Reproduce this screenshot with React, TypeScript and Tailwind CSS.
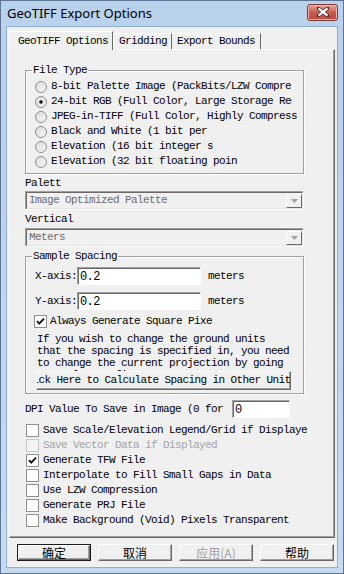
import React from "react";

const mono = "[font-family:'Liberation_Mono','DejaVu_Sans_Mono',monospace] text-[11px] tracking-[-0.6px]";
const cjk = "[font-family:'Noto_Sans_CJK_SC',sans-serif] text-[12px]";

const fileTypes = [
  { label: "8-bit Palette Image (PackBits/LZW Compressed)", w: "w-[240px]" },
  { label: "24-bit RGB (Full Color, Large Storage Required)", w: "w-[241px]" },
  { label: "JPEG-in-TIFF (Full Color, Highly Compressed)", w: "w-[246px]" },
  { label: "Black and White (1 bit per pixel)", w: "w-[157px]" },
  { label: "Elevation (16 bit integer samples)", w: "w-[162px]" },
  { label: "Elevation (32 bit floating point samples)", w: "w-[187px]" },
];

const options = [
  { label: "Save Scale/Elevation Legend/Grid if Displayed", checked: false, disabled: false },
  { label: "Save Vector Data if Displayed", checked: false, disabled: true },
  { label: "Generate TFW File", checked: true, disabled: false },
  { label: "Interpolate to Fill Small Gaps in Data", checked: false, disabled: false },
  { label: "Use LZW Compression", checked: false, disabled: false },
  { label: "Generate PRJ File", checked: false, disabled: false },
  { label: "Make Background (Void) Pixels Transparent", checked: false, disabled: false },
];

function Radio({ checked, id }: { checked?: boolean; id: number }) {
  return (
    <svg width="12" height="12" viewBox="0 0 12 12" className="shrink-0">
      <defs>
        <linearGradient id={`rg${id}`} x1="0" y1="0" x2="1" y2="1">
          <stop offset="0" stopColor="#d4d4d4" />
          <stop offset="1" stopColor="#ffffff" />
        </linearGradient>
      </defs>
      <circle cx="6" cy="6" r="5.5" fill={`url(#rg${id})`} stroke="#8c8e8f" />
      <circle cx="6" cy="6" r="4" fill="none" stroke="#e6e6e6" strokeWidth="0.8" />
      {checked && <circle cx="6" cy="6" r="1.8" fill="#111" />}
    </svg>
  );
}

function Check({ checked, disabled }: { checked?: boolean; disabled?: boolean }) {
  return (
    <svg width="13" height="13" viewBox="0 0 13 13" className="shrink-0">
      <rect x="0.5" y="0.5" width="12" height="12" fill={disabled ? "#f4f4f4" : "#fff"} stroke={disabled ? "#c8c8c8" : "#8e8f8f"} />
      {checked && <path d="M3 6.2 L5.2 8.6 L10 3.6" fill="none" stroke="#111" strokeWidth="1.9" />}
    </svg>
  );
}

function Combo({ text }: { text: string }) {
  return (
    <div className="flex h-[18px] w-[278px] items-center border-t border-l border-[#a0a0a0] shadow-[1px_1px_0_#fff] bg-[#f0f0f0]">
      <div className="flex h-full w-full items-center border-t border-l border-[#696969] border-r border-b border-r-[#e3e3e3] border-b-[#e3e3e3]">
        <span className={`${mono} flex-1 pl-[2px] text-[#6d6d6d]`}>{text}</span>
        <div className="flex h-[14px] w-[16px] items-center justify-center border-t border-l border-white border-r border-b border-r-[#696969] border-b-[#696969] bg-[#f0f0f0]">
          <svg width="7" height="4" viewBox="0 0 7 4">
            <path d="M0 0 H7 L3.5 4 Z" fill="#a0a0a0" />
          </svg>
        </div>
      </div>
    </div>
  );
}

function Field({ value, w }: { value: string; w: string }) {
  return (
    <div className={`${w} h-[18px] shrink-0 border-t border-l border-[#a0a0a0] border-r border-b border-r-white border-b-white`}>
      <div className="flex h-full items-center border-t border-l border-[#696969] bg-white pl-[1px]">
        <span className={`${mono} text-[12px] text-black`}>{value}</span>
      </div>
    </div>
  );
}

function Btn({ label, primary, disabled }: { label: string; primary?: boolean; disabled?: boolean }) {
  return (
    <div className={`h-[17px] w-[74px] ${primary ? "border border-[#1c1c1c]" : ""}`}>
      <div className="flex h-full items-center justify-center border-t border-l border-white border-r border-b border-r-[#696969] border-b-[#696969] bg-[#f0f0f0] shadow-[inset_-1px_-1px_0_#a0a0a0]">
        <span className={`${cjk} leading-none ${disabled ? "text-[#a0a0a0]" : "text-black"}`}>{label}</span>
      </div>
    </div>
  );
}

export default function App() {
  return (
    <div className="h-[574px] w-[344px] border border-[#5d7493] bg-gradient-to-b from-[#b9d1ea] to-[#c6daf0]">
      {/* title bar */}
      <div className="flex h-[26px] items-center justify-between pl-[6px] pr-[5px]">
        <span className="[font-family:'Noto_Sans',sans-serif] text-[13px] text-black">GeoTIFF Export Options</span>
        <div className="mt-[-4px] flex h-[17px] w-[31px] items-center justify-center rounded-[3px] border border-[#7a3a33] bg-gradient-to-b from-[#e4a79c] via-[#c9594b] to-[#c1473a] shadow-[inset_0_0_0_1px_#e8b7ad]">
          <svg width="12" height="10" viewBox="0 0 12 10">
            <path d="M1 1 L11 9 M11 1 L1 9" stroke="#4a2520" strokeWidth="3.6" strokeLinecap="square" />
            <path d="M1.5 1.3 L10.5 8.7 M10.5 1.3 L1.5 8.7" stroke="#fff" strokeWidth="2.2" />
          </svg>
        </div>
      </div>

      {/* client area */}
      <div className="mx-[6px] h-[540px] bg-[#f0f0f0] shadow-[0_0_0_1px_#8fb0d6]">
        <div className="px-[2px] pt-[4px]">
          {/* tabs */}
          <div className={`flex items-end ${mono}`}>
            <div className="relative z-10 -mb-[1px] flex h-[19px] w-[104px] items-center border-t border-l border-white border-r border-r-[#696969] bg-[#f0f0f0] pl-[8px] text-black">
              GeoTIFF Options
            </div>
            <div className="flex h-[16px] w-[59px] items-center border-t border-l border-white border-r border-r-[#696969] pl-[5px] text-black">
              Gridding
            </div>
            <div className="flex h-[16px] w-[89px] items-center border-t border-white border-r border-r-[#696969] pl-[5px] text-black">
              Export Bounds
            </div>
          </div>

          {/* panel */}
          <div className="h-[489px] w-[326px] border-t border-l border-white border-r border-b border-r-[#696969] border-b-[#696969] shadow-[inset_-1px_-1px_0_#a0a0a0]">
            <div className={`pl-[15px] ${mono} text-black`}>
              <fieldset className="mt-[13px] w-[279px] border border-[#a0a0a0] pb-[4px] shadow-[inset_1px_1px_0_#fff,1px_1px_0_#fff]">
                <legend className="ml-[6px] px-[1px] leading-[15px]">File Type</legend>
                <div className="pl-[9px] pt-[1px]">
                  {fileTypes.map((f, i) => (
                    <div key={f.label} className="flex h-[15px] items-center gap-[4px]">
                      <Radio checked={i === 1} id={i} />
                      <span className={`${f.w} overflow-hidden whitespace-nowrap leading-[15px]`}>{f.label}</span>
                    </div>
                  ))}
                </div>
              </fieldset>

              <div className="mt-[2px] h-[15px] leading-[15px]">Palett</div>
              <Combo text="Image Optimized Palette" />
              <div className="mt-[3px] h-[15px] leading-[15px]">Vertical</div>
              <div className="mt-[1px]">
                <Combo text="Meters" />
              </div>

              <fieldset className="mt-[3px] w-[279px] border border-[#a0a0a0] pb-[3px] shadow-[inset_1px_1px_0_#fff,1px_1px_0_#fff]">
                <legend className="ml-[6px] px-[1px] leading-[15px]">Sample Spacing</legend>
                <div className="mt-[3px] flex h-[18px] items-center pl-[9px]">
                  <span className="w-[42px] shrink-0 whitespace-nowrap">X-axis:</span>
                  <Field value="0.2" w="w-[124px]" />
                  <span className="ml-[7px]">meters</span>
                </div>
                <div className="mt-[7px] flex h-[18px] items-center pl-[9px]">
                  <span className="w-[42px] shrink-0 whitespace-nowrap">Y-axis:</span>
                  <Field value="0.2" w="w-[124px]" />
                  <span className="ml-[7px]">meters</span>
                </div>
                <div className="mt-[4px] flex h-[15px] items-center gap-[3px] pl-[8px]">
                  <Check checked />
                  <span className="w-[163px] overflow-hidden whitespace-nowrap">Always Generate Square Pixels</span>
                </div>
                <p className="mt-[4px] h-[38px] w-[266px] overflow-hidden pl-[11px] leading-[12px]">
                  If you wish to change the ground units that the spacing is specified in, you need to change the current projection by going to Tools-&gt;Configure.
                </p>
                <div className="ml-[10px] flex h-[19px] w-[255px] items-center justify-center overflow-hidden border-t border-l border-white border-r border-b border-r-[#696969] border-b-[#696969] pr-[10px] shadow-[inset_-1px_-1px_0_#a0a0a0]">
                  <span className="whitespace-nowrap">Click Here to Calculate Spacing in Other Units</span>
                </div>
              </fieldset>

              <div className="mt-[6px] flex h-[18px] items-center">
                <span className="w-[202px] shrink-0 overflow-hidden whitespace-nowrap">DPI Value To Save in Image (0 for default)</span>
                <div className="ml-[5px]">
                  <Field value="0" w="w-[58px]" />
                </div>
              </div>

              <div className="mt-[5px]">
                {options.map((o) => (
                  <div key={o.label} className="flex h-[15px] items-center gap-[4px] pl-[1px]">
                    <Check checked={o.checked} disabled={o.disabled} />
                    <span className={`w-[264px] overflow-hidden whitespace-nowrap ${o.disabled ? "text-[#a3a3a3]" : ""}`}>{o.label}</span>
                  </div>
                ))}
              </div>
            </div>
          </div>
        </div>

        {/* bottom buttons */}
        <div className="mt-[6px] flex gap-[7px] pl-[10px]">
          <Btn label="确定" primary />
          <Btn label="取消" />
          <Btn label="应用(A)" disabled />
          <Btn label="帮助" />
        </div>
      </div>
    </div>
  );
}
